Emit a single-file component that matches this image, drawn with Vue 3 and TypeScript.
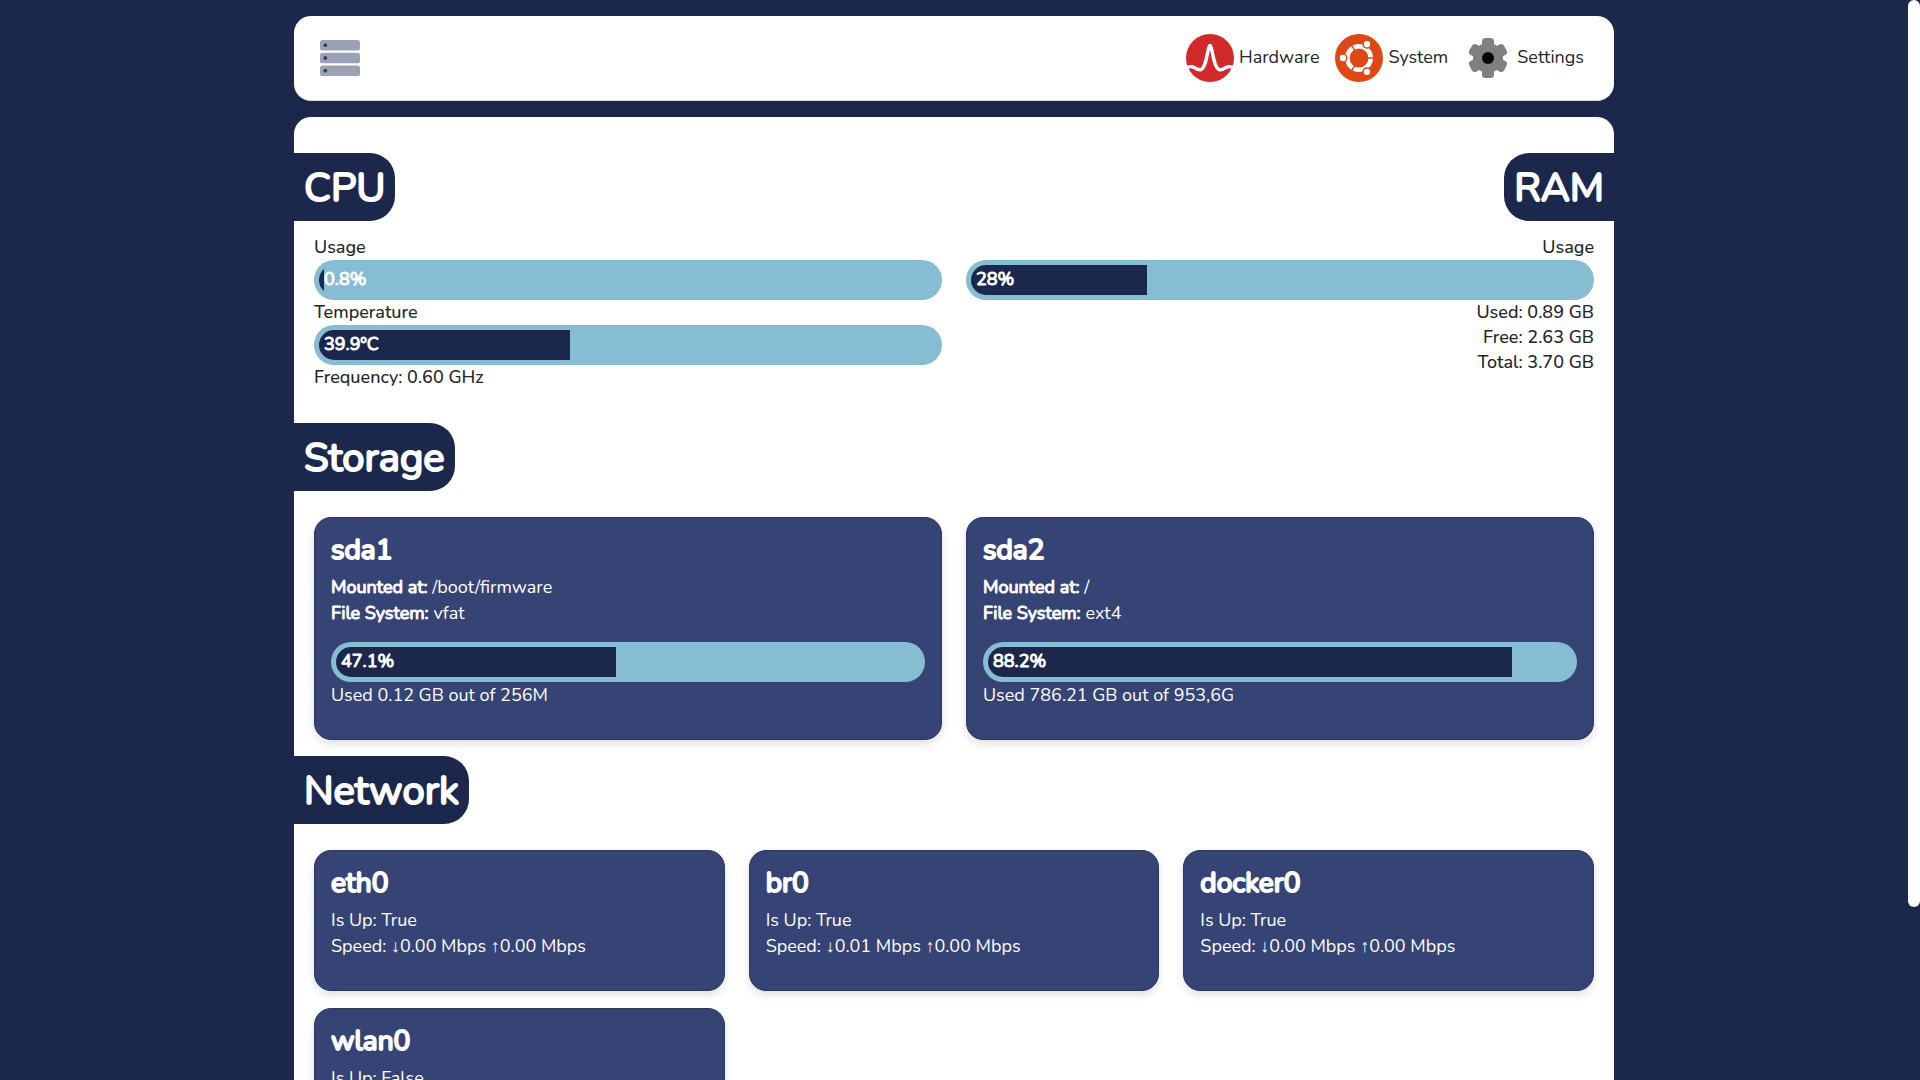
<script setup lang="ts">
interface Disk {
  name: string
  mount: string
  fs: string
  percent: number
  used: string
  total: string
}

interface NetInterface {
  name: string
  up: boolean
  down: string
  upload: string
}

const cpu = { usage: 0.8, temperature: 39.9, frequency: '0.60' }
const ram = { usage: 28, used: '0.89', free: '2.63', total: '3.70' }

const disks: Disk[] = [
  { name: 'sda1', mount: '/boot/firmware', fs: 'vfat', percent: 47.1, used: '0.12', total: '256M' },
  { name: 'sda2', mount: '/', fs: 'ext4', percent: 88.2, used: '786.21', total: '953,6G' },
]

const interfaces: NetInterface[] = [
  { name: 'eth0', up: true, down: '0.00', upload: '0.00' },
  { name: 'br0', up: true, down: '0.01', upload: '0.00' },
  { name: 'docker0', up: true, down: '0.00', upload: '0.00' },
  { name: 'wlan0', up: false, down: '0.00', upload: '0.00' },
]

// The fill is a share of the whole track, which is 5px wider than the inset it sits in.
const fill = (percent: number) => ({ width: `calc((100% + 5px) * ${percent / 100})` })
</script>

<template>
  <div class="page">
    <div class="scroller">
      <div class="container">
        <header class="topbar">
          <a href="#" class="brand" aria-label="Home">
            <svg width="40" height="36" viewBox="0 0 40 36">
              <g fill="#9ca2b5">
                <rect width="40" height="10.6" rx="2.6" />
                <rect y="12.7" width="40" height="10.6" rx="2.6" />
                <rect y="25.4" width="40" height="10.6" rx="2.6" />
              </g>
              <g fill="#2f4067">
                <circle cx="5.3" cy="5.2" r="1.9" />
                <circle cx="5.3" cy="18" r="1.9" />
                <circle cx="5.3" cy="30.7" r="1.9" />
              </g>
            </svg>
          </a>
          <nav class="nav">
            <a href="#" class="nav-link">
              <svg width="48" height="48" viewBox="0 0 48 48">
                <circle cx="24" cy="24" r="24" fill="#d22a2a" />
                <path
                  d="M0 33.8C3.500 32.600 5.500 32 7.500 33.200C10 35 12 36 14.500 35.800C19.500 35 21 20 22.800 13.500Q24 9.500 25.200 13.500C27 20 28.500 35 33.500 35.800C36 36 38 35 40.500 33.200C42.500 32 44.500 32.600 48 33.800"
                  fill="none" stroke="#fff" stroke-width="3.400" stroke-linejoin="round" />
              </svg>
              <span>Hardware</span>
            </a>
            <a href="#" class="nav-link">
              <svg width="48" height="48" viewBox="0 0 48 48">
                <circle cx="24" cy="24" r="24" fill="#dd4814" />
                <circle cx="24" cy="24" r="11.700" fill="none" stroke="#fff" stroke-width="4.600" />
                <g stroke="#dd4814" stroke-width="1.500">
                  <path d="M24 24H40M24 24L16 10.140M24 24L16 37.860" />
                  <circle cx="8" cy="24" r="3.900" fill="#fff" />
                  <circle cx="32" cy="10.140" r="3.900" fill="#fff" />
                  <circle cx="32" cy="37.860" r="3.900" fill="#fff" />
                </g>
              </svg>
              <span>System</span>
            </a>
            <a href="#" class="nav-link">
              <svg width="48" height="48" viewBox="0 0 48 48">
                <g fill="#808080">
                  <circle cx="24" cy="24" r="15" />
                  <rect x="18" y="4" width="12" height="40" rx="3.500" />
                  <rect x="18" y="4" width="12" height="40" rx="3.500" transform="rotate(60 24 24)" />
                  <rect x="18" y="4" width="12" height="40" rx="3.500" transform="rotate(120 24 24)" />
                </g>
                <circle cx="24" cy="24" r="6" />
              </svg>
              <span>Settings</span>
            </a>
          </nav>
        </header>

        <main class="panel">
          <div class="split">
            <section>
              <h1 class="tab">CPU</h1>
              <div class="stats">
                <p id="cpu-usage">Usage</p>
                <div class="track" role="progressbar" aria-labelledby="cpu-usage" :aria-valuenow="cpu.usage">
                  <div class="inset">
                    <div class="fill" :style="fill(cpu.usage)">{{ cpu.usage }}%</div>
                  </div>
                </div>
                <p id="cpu-temp">Temperature</p>
                <div class="track" role="progressbar" aria-labelledby="cpu-temp" :aria-valuenow="cpu.temperature">
                  <div class="inset">
                    <div class="fill" :style="fill(cpu.temperature)">{{ cpu.temperature }}ºC</div>
                  </div>
                </div>
                <p>Frequency: {{ cpu.frequency }} GHz</p>
              </div>
            </section>
            <section class="mirrored">
              <h1 class="tab tab-right">RAM</h1>
              <div class="stats">
                <p id="ram-usage">Usage</p>
                <div class="track" role="progressbar" aria-labelledby="ram-usage" :aria-valuenow="ram.usage">
                  <div class="inset">
                    <div class="fill" :style="fill(ram.usage)">{{ ram.usage }}%</div>
                  </div>
                </div>
                <p>Used: {{ ram.used }} GB</p>
                <p>Free: {{ ram.free }} GB</p>
                <p>Total: {{ ram.total }} GB</p>
              </div>
            </section>
          </div>

          <section class="storage">
            <h1 class="tab">Storage</h1>
            <div class="cards two">
              <article v-for="disk in disks" :key="disk.name" class="card">
                <h2>{{ disk.name }}</h2>
                <p><strong>Mounted at:</strong> {{ disk.mount }}</p>
                <p><strong>File System:</strong> {{ disk.fs }}</p>
                <div class="track disk-track" role="progressbar" :aria-label="disk.name" :aria-valuenow="disk.percent">
                  <div class="inset">
                    <div class="fill" :style="fill(disk.percent)">{{ disk.percent }}%</div>
                  </div>
                </div>
                <p>Used {{ disk.used }} GB out of {{ disk.total }}</p>
              </article>
            </div>
          </section>

          <section class="network">
            <h1 class="tab">Network</h1>
            <div class="cards three">
              <article v-for="net in interfaces" :key="net.name" class="card">
                <h2>{{ net.name }}</h2>
                <p>Is Up: {{ net.up ? 'True' : 'False' }}</p>
                <p>Speed: <span class="arrow">↓</span>{{ net.down }} Mbps <span class="arrow">↑</span>{{ net.upload }} Mbps</p>
              </article>
            </div>
          </section>
        </main>
      </div>
    </div>
    <div class="scrollbar" aria-hidden="true">
      <div class="thumb"></div>
    </div>
  </div>
</template>

<style>
body {
  margin: 0;
  background: #1c284b;
}
</style>

<style scoped>
* {
  box-sizing: border-box;
}

.page {
  display: flex;
  height: 100vh;
  background: #1c284b;
  color: #212529;
  font-family: Nunito, Lato, "Noto Sans", sans-serif;
  font-size: 18px;
  line-height: 25px;
}

.scroller {
  flex: 1;
  overflow-y: auto;
  scrollbar-width: none;
}

.scrollbar {
  width: 12px;
}

.thumb {
  height: 84%;
  background: #fff;
  border-radius: 6px;
}

.container {
  max-width: 1320px;
  margin: 0 auto;
  padding: 16px 0;
}

.topbar {
  display: flex;
  align-items: center;
  justify-content: space-between;
  height: 85px;
  padding: 0 30px 0 26px;
  background: #fff;
  border-bottom: 1px solid #d5d7de;
  border-radius: 17px;
}

svg {
  display: block;
}

.nav {
  display: flex;
  gap: 16px;
}

.nav-link {
  display: flex;
  align-items: center;
  gap: 5px;
  color: #212529;
  text-decoration: none;
}

.nav-link span {
  padding-bottom: 2px;
}

.panel {
  margin-top: 16px;
  padding: 36px 0 100px;
  background: #fff;
  border-radius: 17px;
}

.split {
  display: grid;
  grid-template-columns: 1fr 1fr;
}

h1,
h2,
p {
  margin: 0;
}

h1,
h2 {
  font-weight: 400;
  -webkit-text-stroke: 2px currentColor;
  paint-order: stroke fill;
}

strong,
.fill {
  font-weight: 400;
  -webkit-text-stroke: 1px currentColor;
}

.tab {
  width: fit-content;
  padding: 9px 10px 7px;
  background: #1c284b;
  color: #fff;
  font-size: 40px;
  line-height: 52px;
  border-radius: 0 25px 25px 0;
}

.tab-right {
  margin-left: auto;
  border-radius: 25px 0 0 25px;
}

.stats {
  padding: 14px 12px 0 20px;
  font-weight: 500;
}

.mirrored {
  text-align: right;
}

.mirrored .stats {
  padding: 14px 20px 0 12px;
}

.track {
  height: 40px;
  padding: 5px 0 5px 5px;
  background: #86bdd2;
  border-radius: 20px;
  text-align: left;
}

.inset {
  height: 30px;
  overflow: hidden;
  border-radius: 15px 0 0 15px;
}

.fill {
  height: 30px;
  padding-left: 5px;
  background: #1c284b;
  color: #fff;
  line-height: 28px;
  white-space: nowrap;
}

.storage {
  margin-top: 33px;
}

.network {
  margin-top: 16px;
}

.cards {
  display: grid;
  gap: 17px 24px;
  padding: 26px 20px 0;
}

.two {
  grid-template-columns: repeat(2, 1fr);
}

.three {
  grid-template-columns: repeat(3, 1fr);
}

.card {
  padding: 16px 16px 31px;
  background: #364375;
  border: 1px solid #2d3760;
  border-radius: 17px;
  box-shadow: 0 4px 8px rgba(0, 0, 0, 0.12);
  color: #fff;
  line-height: 26px;
}

.card h2 {
  margin-bottom: 8px;
  font-size: 28px;
  line-height: 32px;
}

.disk-track {
  margin-top: 16px;
}

.arrow {
  font-family: "Liberation Sans", sans-serif;
}
</style>
